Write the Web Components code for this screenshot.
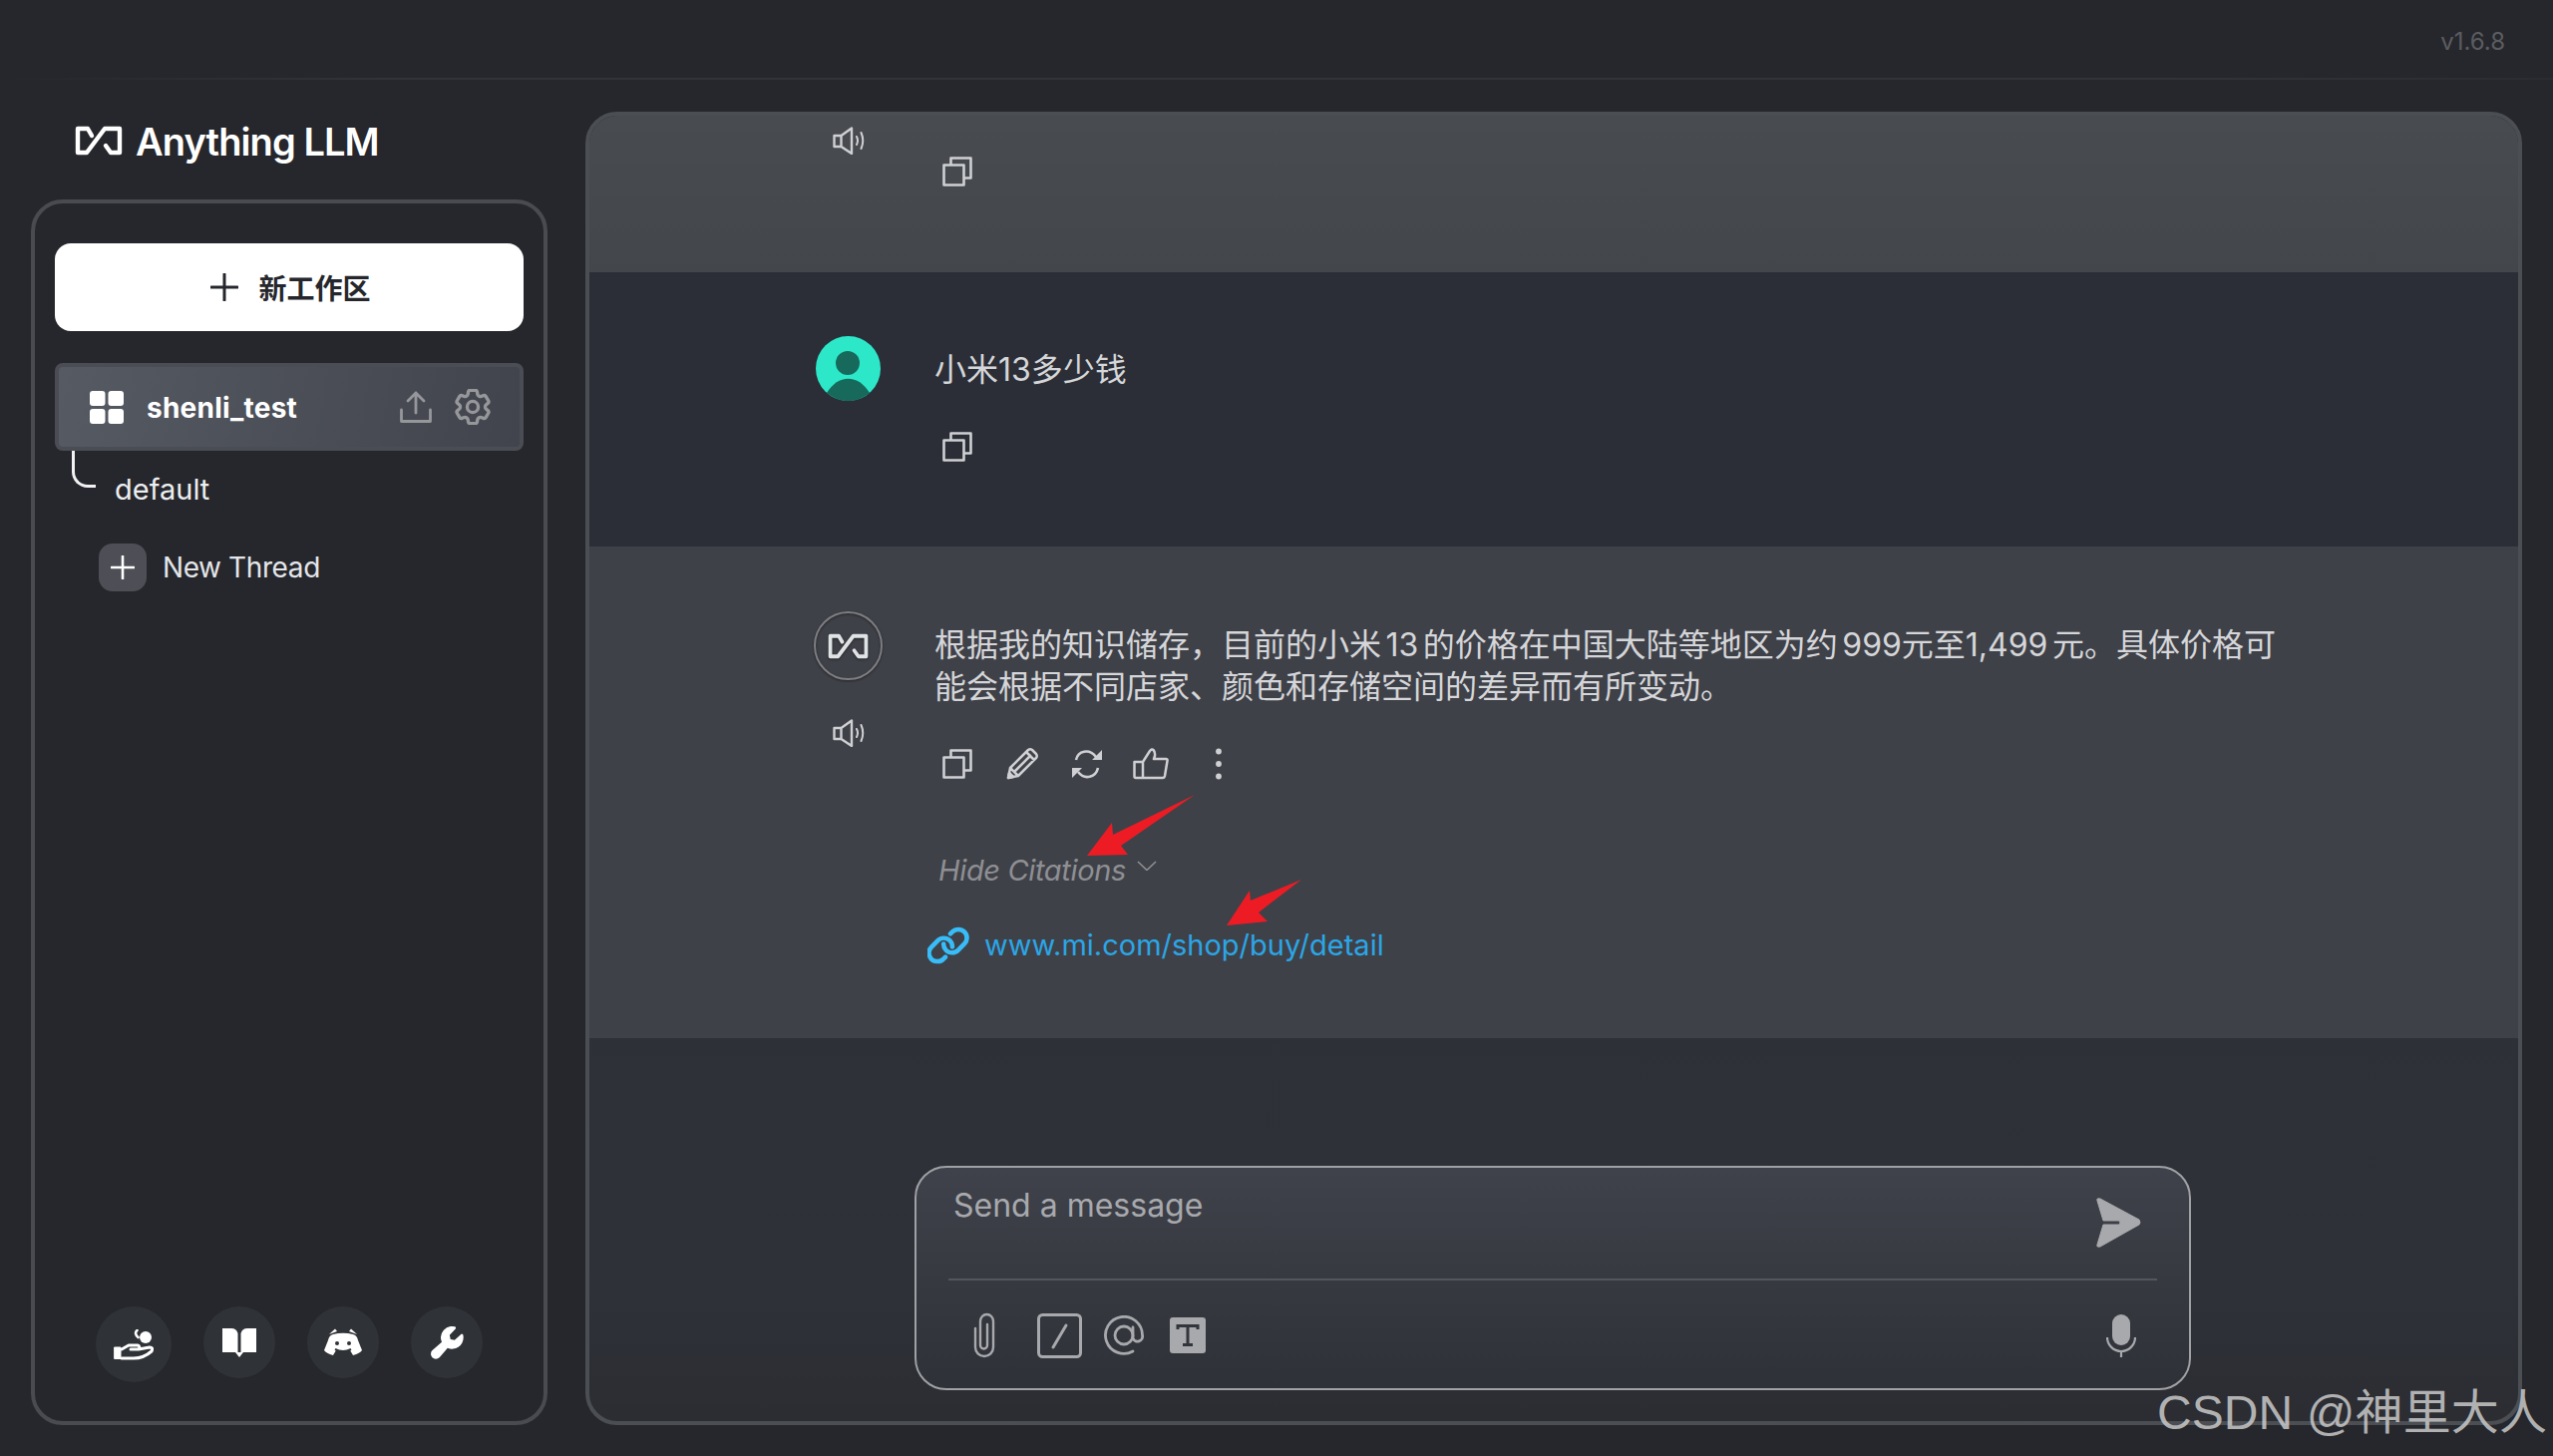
<!DOCTYPE html>
<html lang="zh">
<head>
<meta charset="utf-8">
<title>AnythingLLM</title>
<style>
  html, body { margin: 0; height: 100%; background: #26272c; }
  body { font-family: Inter, "Noto Sans CJK SC", sans-serif; }
</style>
</head>
<body>
<app-shell></app-shell>

<script>
const ICONS = {
  logo: `<svg viewBox="0 0 48 30" fill="none" stroke="currentColor" stroke-width="4.4" stroke-linejoin="round" stroke-linecap="round"><path d="M17 10 13 3H3V27H12L30 3H45V27H36L31 20"/></svg>`,
  plus: `<svg viewBox="0 0 28 28" fill="none" stroke="currentColor" stroke-width="3" stroke-linecap="round"><path d="M14 1V27M1 14H27"/></svg>`,
  grid: `<svg viewBox="0 0 34 33" fill="currentColor"><rect width="15.5" height="15" rx="3"/><rect x="18.5" width="15.5" height="15" rx="3"/><rect y="18" width="15.5" height="15" rx="3"/><rect x="18.5" y="18" width="15.5" height="15" rx="3"/></svg>`,
  upload: `<svg viewBox="0 0 32 32" fill="none" stroke="currentColor" stroke-width="2.8" stroke-linecap="round" stroke-linejoin="round"><path d="M1.5 19V30.5H30.5V19M16 22V2M8 10 16 2 24 10"/></svg>`,
  gear: `<svg viewBox="2.3 2.3 19.4 19.4" fill="none" stroke="currentColor" stroke-width="1.8" stroke-linecap="round" stroke-linejoin="round"><path d="M9.594 3.94c.09-.542.56-.94 1.11-.94h2.593c.55 0 1.02.398 1.11.94l.213 1.281c.063.374.313.686.645.87.074.04.147.083.22.127.325.196.72.257 1.075.124l1.217-.456a1.125 1.125 0 0 1 1.37.49l1.296 2.247a1.125 1.125 0 0 1-.26 1.431l-1.003.827c-.293.241-.438.613-.43.992a7.723 7.723 0 0 1 0 .255c-.008.378.137.75.43.991l1.004.827c.424.35.534.955.26 1.43l-1.298 2.247a1.125 1.125 0 0 1-1.369.491l-1.217-.456c-.355-.133-.75-.072-1.076.124a6.47 6.47 0 0 1-.22.128c-.331.183-.581.495-.644.869l-.213 1.281c-.09.543-.56.94-1.11.94h-2.594c-.55 0-1.019-.398-1.11-.94l-.213-1.281c-.062-.374-.312-.686-.644-.87a6.52 6.52 0 0 1-.22-.127c-.325-.196-.72-.257-1.076-.124l-1.217.456a1.125 1.125 0 0 1-1.369-.49l-1.297-2.247a1.125 1.125 0 0 1 .26-1.431l1.004-.827c.292-.24.437-.613.43-.991a6.932 6.932 0 0 1 0-.255c.007-.38-.138-.751-.43-.992l-1.004-.827a1.125 1.125 0 0 1-.26-1.43l1.297-2.247a1.125 1.125 0 0 1 1.37-.491l1.216.456c.356.133.751.072 1.076-.124.072-.044.146-.086.22-.128.332-.183.582-.495.644-.869l.214-1.28Z"/><circle cx="12" cy="12" r="3"/></svg>`,
  hand: `<svg viewBox="0 0 40 31" fill="none" stroke="currentColor" stroke-width="3" stroke-linecap="round" stroke-linejoin="round"><circle cx="32" cy="8" r="6" fill="currentColor" stroke="none"/><path d="M24.5 8C22 6 21 3 23.5 1" stroke-width="2.6"/><path d="M1 18H7V29.5H1Z" fill="currentColor" stroke-width="1"/><path d="M8 20 15 16H24Q27 17 25 20H17M25 20 36 18Q40 18 38 22 30 29 20 29H8"/></svg>`,
  book: `<svg viewBox="0 0 36 30" fill="currentColor"><path d="M1 1H10Q15 1 16.5 6V25H1Z"/><path d="M35 1H26Q21 1 19.5 6V25H35Z"/><path d="M14 25H22L18 30Z"/></svg>`,
  discord: `<svg viewBox="0 0 38 28"><path fill="currentColor" d="M9 6Q19 3.5 29 6Q33 7 34 12L38 22Q36 25 29 27L26 22Q19 24 12 22L9 27Q2 25 0 22L4 12Q5 7 9 6Z"/><path fill="currentColor" d="M5 6 11 .5 13 3ZM33 6 27 .5 25 3Z"/><path fill="none" stroke="#2f3237" stroke-width="2" d="M11 21Q19 25 27 21"/><circle cx="13" cy="15" r="2" fill="#2f3237"/><circle cx="25" cy="15" r="2" fill="#2f3237"/></svg>`,
  wrench: `<svg viewBox="24 24 210 210" fill="currentColor"><path d="M232,96a72,72,0,0,1-100.94,66L79,222.22c-.12.14-.26.29-.39.42a32,32,0,0,1-45.26-45.26c.14-.13.28-.27.43-.39L94,124.94a72.07,72.07,0,0,1,83.54-98.78,8,8,0,0,1,3.93,13.19L144,80l5.66,26.35L176,112l40.65-37.52a8,8,0,0,1,13.19,3.93A72.6,72.6,0,0,1,232,96Z"/></svg>`,
  speaker: `<svg viewBox="0 0 33 28" fill="none" stroke="currentColor" stroke-width="2.4" stroke-linejoin="round" stroke-linecap="round"><path d="M1.5 9H8.5V20H1.5ZM8.5 9 19 1.5V27L8.5 20"/><path d="M24 10Q26 14 24 18M28.5 6Q32 14 28.5 22" stroke-width="2"/></svg>`,
  copy: `<svg viewBox="0 0 30 30" fill="none" stroke="currentColor" stroke-width="2.6" stroke-linejoin="round"><rect x="1.5" y="8.5" width="20" height="20"/><path d="M8.5 8.5V1.5H28.5V21.5H21.5"/></svg>`,
  pencil: `<svg viewBox="0 0 33 33" fill="none" stroke="currentColor" stroke-width="2.5" stroke-linejoin="round"><path d="M2 31 4 21 22 3Q24 1.5 26 3L30 7Q31.5 9 30 11L12 29ZM8 25 25 8M20 5 28 13M4 21 12 29"/><path d="M2 31 3 26 7 30Z" fill="currentColor"/></svg>`,
  refresh: `<svg viewBox="0 0 30 32" fill="none" stroke="currentColor" stroke-width="2.6"><path d="M4 12C6 3 17 0 24 9M6 24C13 33 24 29 26 20"/><path d="M30 2V12H20ZM0 30V20H10Z" fill="currentColor" stroke="none"/></svg>`,
  thumb: `<svg viewBox="0 0 36 32" fill="none" stroke="currentColor" stroke-width="2.5" stroke-linejoin="round"><path d="M1.5 14H10V30H3Q1.5 30 1.5 28.5ZM10 14 17 3Q19 .5 20.5 2 22.5 4 22 8L21 11H33Q35 11 34.5 13L32 28Q31.5 30 30 30H10"/></svg>`,
  dots: `<svg viewBox="0 0 8 32" fill="currentColor"><circle cx="4" cy="3.5" r="2.9"/><circle cx="4" cy="16" r="2.9"/><circle cx="4" cy="28.5" r="2.9"/></svg>`,
  chevron: `<svg viewBox="0 0 20 10" fill="none" stroke="currentColor" stroke-width="1.6"><path d="M1 1 10 9.5 19 1"/></svg>`,
  link: `<svg viewBox="24 24 224 208" fill="currentColor" stroke="currentColor" stroke-width="9"><path d="M240,88.23a54.43,54.43,0,0,1-16,37L189.25,160a54.27,54.27,0,0,1-38.63,16h-.05A54.63,54.63,0,0,1,96,119.84a8,8,0,0,1,16,.45A38.62,38.62,0,0,0,150.58,160h0a38.39,38.39,0,0,0,27.31-11.31l34.75-34.75a38.63,38.63,0,0,0-54.63-54.63l-11,11A8,8,0,0,1,135.7,59l11-11A54.65,54.65,0,0,1,224,48,54.86,54.86,0,0,1,240,88.23ZM109,185.66l-11,11A38.41,38.41,0,0,1,70.6,208h0a38.63,38.63,0,0,1-27.29-65.94L78,107.31A38.63,38.63,0,0,1,144,135.71a8,8,0,0,0,16,.45A54.86,54.86,0,0,0,144,96a54.65,54.65,0,0,0-77.27,0L32,130.75A54.62,54.62,0,0,0,70.56,224h0a54.28,54.28,0,0,0,38.64-16l11-11A8,8,0,0,0,109,185.66Z"/></svg>`,
  send: `<svg viewBox="0 0 45 50" fill="currentColor" stroke="currentColor" stroke-width="1" stroke-linejoin="round"><path d="M1 3Q0 0 4 1L43 22Q45 25 43 27L4 49Q0 50 1 47L7 27H23Q25 25 23 23H7Z"/></svg>`,
  clip: `<svg viewBox="0 0 22 46" fill="none" stroke="currentColor" stroke-width="2.4" stroke-linecap="round"><path d="M2 16V35A9 9 0 0 0 20 35V9A6.5 7 0 0 0 7 9V33A3.5 3.5 0 0 0 14 33V12"/></svg>`,
  slash: `<svg viewBox="0 0 45 45" fill="none" stroke="currentColor" stroke-width="3" stroke-linecap="round"><rect x="1.5" y="1.5" width="42" height="42" rx="4"/><path d="M29 12 16 34"/></svg>`,
  at: `<svg viewBox="0 0 40 40" fill="none" stroke="currentColor" stroke-width="2.8" stroke-linecap="round"><circle cx="20" cy="20" r="9"/><path d="M29 12V23A5 5 0 0 0 38.5 20 18.5 18.5 0 1 0 29 36"/></svg>`,
  type: `<svg viewBox="0 0 36 36"><rect width="36" height="36" rx="3" fill="currentColor"/><path d="M8 12V8.5H28V12M18 8.5V27M13 27.5H23" fill="none" stroke="#33353c" stroke-width="3"/></svg>`,
  mic: `<svg viewBox="0 0 30 43" fill="currentColor"><rect x="6" width="18" height="31" rx="9"/><path d="M1 23A14 14 0 0 0 29 23M15 37V43" fill="none" stroke="currentColor" stroke-width="2.2"/></svg>`,
  user: `<svg viewBox="0 0 65 65"><circle cx="32.5" cy="32.5" r="32.5" fill="#2ce8c9"/><circle cx="32" cy="27" r="12" fill="#176a5b"/><path d="M11 57Q20 42.7 32.5 42.7 45 42.7 54 57A32.5 32.5 0 0 1 11 57Z" fill="#176a5b"/></svg>`
};

class AppIcon extends HTMLElement {
  connectedCallback() {
    const root = this.attachShadow({ mode: "open" });
    root.innerHTML = `
      <style>
        :host { display: inline-flex; flex: none; width: var(--w, 30px); height: var(--h, 30px); }
        svg { display: block; width: 100%; height: 100%; }
      </style>
      ${ICONS[this.getAttribute("name")]}`;
    const w = this.getAttribute("w");
    const h = this.getAttribute("h");
    if (w) this.style.setProperty("--w", w + "px");
    if (h) this.style.setProperty("--h", h + "px");
  }
}
customElements.define("app-icon", AppIcon);

const sidebarTemplate = document.createElement("template");
sidebarTemplate.innerHTML = `
  <style>
    :host { display: flex; flex-direction: column; width: 518px; flex: none; }
    .brand { display: flex; align-items: center; gap: 13px; height: 88px; padding: 0 0 28px 44px; box-sizing: border-box; color: #fff; font-size: 38px; font-weight: 600; letter-spacing: -0.9px; }
    .brand app-icon { margin-top: -2px; }
    .panel { flex: 1; display: flex; flex-direction: column; box-sizing: border-box; border: 4px solid #4a4b50; border-radius: 32px; padding: 40px 20px 39px; }
    .new { display: flex; align-items: center; justify-content: center; gap: 20px; height: 88px; padding-left: 3px; background: #fff; color: #25272c; border-radius: 16px; font-size: 28px; font-weight: 700; }
    .workspace { margin-top: 32px; display: flex; align-items: center; height: 88px; box-sizing: border-box; border: 4px solid #4a4d53; border-radius: 8px; background: linear-gradient(100deg, #565a63, #41444c); padding: 0 29px 0 31px; color: #fff; font-size: 28px; font-weight: 700; }
    .workspace span { margin-left: 23px; flex: 1; letter-spacing: 0.25px; padding-top: 1px; }
    .workspace .tool { color: #96979b; }
    .workspace .tool + .tool { margin-left: 23px; }
    .thread { position: relative; padding: 19px 0 0 60px; color: #eceef0; font-size: 29px; line-height: 40px; }
    .curve { position: absolute; left: 17px; top: 0; width: 24px; height: 37px; box-sizing: border-box; border: solid #f2f2f2; border-width: 0 0 3px 3px; border-bottom-left-radius: 16px; }
    .add { margin-top: 34px; display: flex; align-items: center; gap: 16px; padding-left: 44px; color: #e4e6ea; font-size: 28px; letter-spacing: -0.4px; }
    .add b { width: 48px; height: 48px; display: flex; align-items: center; justify-content: center; background: #4e4f56; border-radius: 14px; color: #fff; }
    .foot { margin-top: auto; display: flex; justify-content: center; align-items: flex-start; gap: 32px; }
    .foot div { width: 72px; height: 72px; border-radius: 50%; background: #2f3237; color: #fff; display: flex; align-items: center; justify-content: center; }
    .foot div.big { width: 76px; height: 76px; }
  </style>
  <div class="brand"><app-icon name="logo" w="48" h="30"></app-icon>Anything LLM</div>
  <div class="panel">
    <div class="new"><app-icon name="plus" w="28" h="28"></app-icon>新工作区</div>
    <div class="workspace">
      <app-icon name="grid" w="34" h="33"></app-icon>
      <span>shenli_test</span>
      <app-icon class="tool" name="upload" w="32" h="32"></app-icon>
      <app-icon class="tool" name="gear" w="36" h="36"></app-icon>
    </div>
    <div class="thread"><i class="curve"></i>default</div>
    <div class="add"><b><app-icon name="plus" w="24" h="24"></app-icon></b>New Thread</div>
    <div class="foot">
      <div class="big"><app-icon name="hand" w="40" h="31"></app-icon></div>
      <div><app-icon name="book" w="36" h="30"></app-icon></div>
      <div><app-icon name="discord" w="38" h="28"></app-icon></div>
      <div><app-icon name="wrench" w="33" h="33"></app-icon></div>
    </div>
  </div>`;

class AppSidebar extends HTMLElement {
  connectedCallback() {
    this.attachShadow({ mode: "open" }).append(sidebarTemplate.content.cloneNode(true));
  }
}
customElements.define("app-sidebar", AppSidebar);

const messageTemplate = document.createElement("template");
messageTemplate.innerHTML = `
  <style>
    :host { display: grid; grid-template-columns: 69px 1fr; column-gap: 52px; padding-left: 225px; box-sizing: border-box; background: var(--tone, #2b2e36); color: #d5d6d9; font-size: 32px; line-height: 42px; word-spacing: -4.5px; }
    .side { display: flex; flex-direction: column; align-items: center; }
    .body { min-width: 0; }
    .text { padding-top: 13px; width: 1370px; }
  </style>
  <div class="side"><slot name="avatar"></slot></div>
  <div class="body">
    <div class="text"><slot></slot></div>
    <slot name="extra"></slot>
  </div>`;

class ChatMessage extends HTMLElement {
  connectedCallback() {
    this.attachShadow({ mode: "open" }).append(messageTemplate.content.cloneNode(true));
  }
}
customElements.define("chat-message", ChatMessage);

const composerTemplate = document.createElement("template");
composerTemplate.innerHTML = `
  <style>
    :host { display: block; flex: none; width: 1280px; height: 225px; box-sizing: border-box; margin: auto 0 31px 326px; border: 2px solid #a0a1a5; border-radius: 32px; background: linear-gradient(#3f424a, #2f3138); color: #a8a9ad; padding: 0 32px; }
    .top { height: 113px; box-sizing: border-box; border-bottom: 2px solid #54565e; display: flex; justify-content: space-between; padding: 14px 0 0 5px; font-size: 32px; line-height: 48px; letter-spacing: 0; }
    .top app-icon { margin: 16px 16px 0 0; }
    .bar { display: flex; align-items: center; height: 110px; padding: 0 21px 0 25px; }
    .bar app-icon:nth-child(2) { margin-left: 42px; }
    .bar app-icon:nth-child(3) { margin-left: 22px; }
    .bar app-icon:nth-child(4) { margin-left: 26px; }
    .bar app-icon:last-child { margin-left: auto; }
  </style>
  <div class="top"><span>Send a message</span><app-icon name="send" w="45" h="50"></app-icon></div>
  <div class="bar">
    <app-icon name="clip" w="22" h="46"></app-icon>
    <app-icon name="slash" w="45" h="45"></app-icon>
    <app-icon name="at" w="40" h="40"></app-icon>
    <app-icon name="type" w="36" h="36"></app-icon>
    <app-icon name="mic" w="30" h="43"></app-icon>
  </div>`;

class ChatComposer extends HTMLElement {
  connectedCallback() {
    this.attachShadow({ mode: "open" }).append(composerTemplate.content.cloneNode(true));
  }
}
customElements.define("chat-composer", ChatComposer);

const panelTemplate = document.createElement("template");
panelTemplate.innerHTML = `
  <style>
    :host { flex: 1; min-width: 0; display: flex; flex-direction: column; box-sizing: border-box; border: 4px solid #4b4e53; border-radius: 32px; overflow: hidden; background: linear-gradient(#2d3037 60%, #2e3138 90%, #2b2d32); }
    .first { --tone: linear-gradient(#484b50, #43464b); height: 157px; padding-top: 11px; }
    .second { --tone: #2b2e36; height: 275px; padding-top: 64px; }
    .third { --tone: #3f4148; height: 493px; padding-top: 65px; }
    .speaker { color: #cfd0d3; display: block; margin-left: 2px; }
    .actions { display: flex; align-items: center; margin-top: 39px; color: #cfd0d3; height: 33px; }
    .first .actions { margin-top: 15px; }
    .actions app-icon { margin-left: 8px; }
    .actions app-icon:nth-child(2) { margin-left: 34px; }
    .actions app-icon:nth-child(3) { margin-left: 33px; }
    .actions app-icon:nth-child(4) { margin-left: 31px; }
    .actions app-icon:nth-child(5) { margin-left: 46px; }
    .bot { width: 69px; height: 69px; box-sizing: border-box; border: 2px solid #7d7e83; border-radius: 50%; display: flex; align-items: center; justify-content: center; color: #dfe3e6; filter: drop-shadow(0 1px 1px #222); }
    .cite { margin: 71px 0 0 4px; display: flex; align-items: center; gap: 11px; color: #8e8f93; font-size: 29px; font-style: italic; line-height: 40px; letter-spacing: -0.35px; word-spacing: 0; }
    .cite app-icon { margin-top: -10px; }
    .source { margin: 35px 0 0 -7px; display: flex; align-items: center; gap: 13px; color: #2ba6e6; font-size: 29px; line-height: 40px; word-spacing: 0; }
    .source app-icon { color: #38bdf8; }
  </style>
  <chat-message class="first">
    <div slot="avatar"><app-icon class="speaker" name="speaker" w="33" h="28"></app-icon></div>
    <div slot="extra" class="actions"><app-icon name="copy"></app-icon></div>
  </chat-message>
  <chat-message class="second">
    <app-icon slot="avatar" name="user" w="65" h="65"></app-icon>
    小米13多少钱
    <div slot="extra" class="actions"><app-icon name="copy"></app-icon></div>
  </chat-message>
  <chat-message class="third">
    <div slot="avatar" class="bot"><app-icon name="logo" w="41" h="26"></app-icon></div>
    <app-icon slot="avatar" class="speaker" name="speaker" w="33" h="28" style="margin-top:39px"></app-icon>
    根据我的知识储存，目前的小米 13 的价格在中国大陆等地区为约 999元至1,499 元。具体价格可能会根据不同店家、颜色和存储空间的差异而有所变动。
    <div slot="extra">
      <div class="actions">
        <app-icon name="copy"></app-icon>
        <app-icon name="pencil" w="33" h="33"></app-icon>
        <app-icon name="refresh" w="30" h="32"></app-icon>
        <app-icon name="thumb" w="36" h="32"></app-icon>
        <app-icon name="dots" w="8" h="32"></app-icon>
      </div>
      <div class="cite">Hide Citations<app-icon name="chevron" w="20" h="10"></app-icon></div>
      <div class="source"><app-icon name="link" w="44" h="38"></app-icon>www.mi.com/shop/buy/detail</div>
    </div>
  </chat-message>
  <chat-composer></chat-composer>`;

class ChatPanel extends HTMLElement {
  connectedCallback() {
    this.attachShadow({ mode: "open" }).append(panelTemplate.content.cloneNode(true));
  }
}
customElements.define("chat-panel", ChatPanel);

const shellTemplate = document.createElement("template");
shellTemplate.innerHTML = `
  <style>
    :host { display: flex; flex-direction: column; position: relative; width: 2560px; height: 1460px; overflow: hidden; background: #26272c; }
    .top { height: 78px; display: flex; justify-content: flex-end; align-items: center; padding: 4px 48px 0 0; box-sizing: border-box; color: #5b5c60; font-size: 24px; flex: none; }
    .rule { height: 2px; flex: none; background: linear-gradient(90deg, #26272c, #323337 15%, #323337 85%, #2b2c30); }
    .row { flex: 1; min-height: 0; display: flex; gap: 38px; padding: 32px 31px 31px; }
    .arrows { position: absolute; inset: 0; pointer-events: none; }
    .mark { position: absolute; right: 6px; bottom: 15px; color: rgba(208,208,208,.82); font-family: "Liberation Sans", "Noto Sans CJK SC", sans-serif; font-size: 48px; line-height: 56px; letter-spacing: 0.1px; }
  </style>
  <div class="top">v1.6.8</div>
  <div class="rule"></div>
  <div class="row">
    <app-sidebar></app-sidebar>
    <chat-panel></chat-panel>
  </div>
  <svg class="arrows" viewBox="0 0 2560 1460" fill="#ed1c24">
    <path d="M1090 858 1115 825 1116 837 1198 797 1124 848 1131 857Z"/>
    <path d="M1230 928 1253 893 1254 903 1305 882 1262 915 1271 924Z"/>
  </svg>
  <div class="mark">CSDN @神里大人</div>`;

class AppShell extends HTMLElement {
  connectedCallback() {
    this.attachShadow({ mode: "open" }).append(shellTemplate.content.cloneNode(true));
  }
}
customElements.define("app-shell", AppShell);
</script>
</body>
</html>
